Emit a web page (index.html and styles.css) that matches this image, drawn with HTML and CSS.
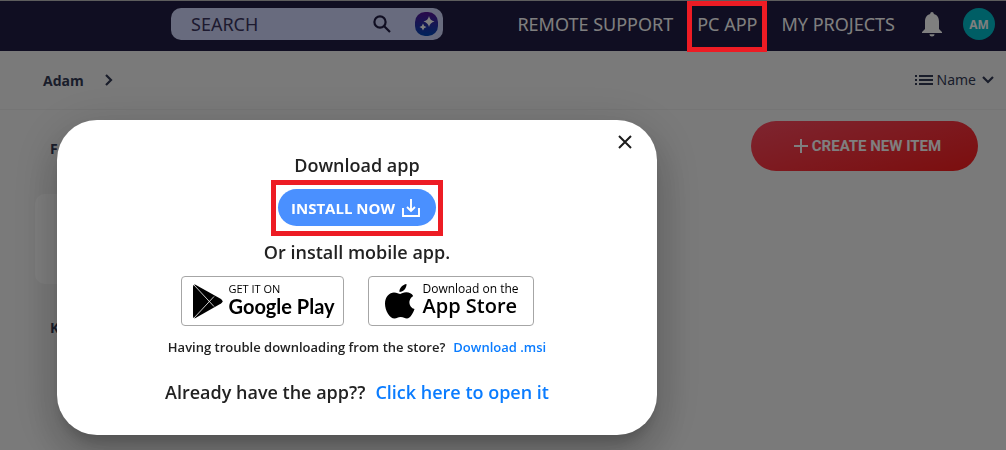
FILE: index.html
```html
<!DOCTYPE html>
<html lang="en">
<head>
<meta charset="utf-8">
<meta name="viewport" content="width=device-width, initial-scale=1">
<title>Projects</title>
<link rel="stylesheet" href="styles.css">
</head>
<body>
<header class="topbar">
  <form class="search">
    <input class="search-input" type="search" placeholder="SEARCH" aria-label="Search">
    <button class="icon-btn" type="button" aria-label="Search"><svg width="18" height="18" viewBox="0 0 18 18" fill="none" stroke="#201c44" stroke-width="2.2"><circle cx="7" cy="7" r="5.6"/><path d="M11 11l6 6"/></svg></button>
    <button class="ai-btn" type="button" aria-label="Assistant"><svg width="16" height="16" viewBox="0 0 16 16" fill="#fff"><path d="M10 0q1 4.500 5.500 5.500q-4.500 1-5.500 5.500q-1-4.500-5.500-5.500q4.500-1 5.500-5.500zM4 7.500q.6 3 3.500 3.500q-2.900.6-3.500 3.500q-.6-2.900-3.500-3.500q2.900-.5 3.500-3.500z"/></svg></button>
  </form>
  <nav class="nav">
    <a href="#">REMOTE SUPPORT</a>
    <a href="#">PC APP</a>
    <a href="#">MY PROJECTS</a>
  </nav>
  <button class="icon-btn bell" type="button" aria-label="Notifications"><svg width="20" height="25" viewBox="0 0 20 25" fill="#fff"><path d="M10 0c1.100 0 1.800.8 1.800 1.900C15.400 2.800 17 5.800 17 9.500V17l3 3v1H0v-1l3-3V9.500c0-3.700 1.600-6.700 5.200-7.600C8.200.8 8.900 0 10 0zM7.500 22.300h5c0 1.400-1.100 2.200-2.500 2.200s-2.500-.8-2.500-2.200z"/></svg></button>
  <button class="avatar" type="button">AM</button>
</header>
<div class="crumbs">
  <a class="crumb" href="#">Adam</a>
  <svg width="8" height="12" viewBox="0 0 8 12" fill="none" stroke="#333a55" stroke-width="2.200"><path d="M1 1l5 5-5 5"/></svg>
  <button class="sort" type="button"><svg width="18" height="10" viewBox="0 0 18 10" fill="#333a55"><path d="M0 0h2v2H0zM4 0h14v2H4zM0 4h2v2H0zM4 4h14v2H4zM0 8h2v2H0zM4 8h14v2H4z"/></svg><span>Name</span><svg class="caret" width="12" height="8" viewBox="0 0 12 8" fill="none" stroke="#333a55" stroke-width="2.200"><path d="M1 1l5 5 5-5"/></svg></button>
</div>
<main class="content">
  <div class="actions">
    <h2 class="section-title">F</h2>
    <button class="create" type="button"><svg width="14" height="14" viewBox="0 0 14 14" stroke="#fff" stroke-width="2"><path d="M7 0v14M0 7h14"/></svg><span>CREATE NEW ITEM</span></button>
  </div>
  <div class="card"></div>
  <h2 class="section-title">K</h2>
</main>
<div class="backdrop">
  <section class="modal" role="dialog" aria-label="Download app">
    <button class="close" type="button" aria-label="Close"><svg width="14" height="14" viewBox="0 0 14 14" fill="none" stroke="#1c1c1c" stroke-width="2"><path d="M1 1l12 12M13 1L1 13"/></svg></button>
    <h1 class="line">Download app</h1>
    <div class="install-mark">
      <button class="install" type="button"><span>INSTALL NOW</span><svg width="18" height="18" viewBox="0 0 18 18" fill="none" stroke="#fff" stroke-width="1.900"><path d="M1 9v8h16V9M9 0v12M5 8l4 4 4-4"/></svg></button>
    </div>
    <p class="line">Or install mobile app.</p>
    <div class="stores">
      <a class="store google" href="#"><svg width="31" height="35" viewBox="0 0 31 35"><path d="M2.500.7L28 15q3 2.300 0 4.600L2.500 34Q0 35 0 32V3Q0-.2 2.500.7z" fill="#000"/><path d="M1 1l20 21.500M1 34l20-21.500" stroke="#fff" stroke-width=".8"/></svg><span class="store-text"><small>GET IT ON</small><strong>Google Play</strong></span></a>
      <a class="store apple" href="#"><svg width="30" height="35" viewBox="0 0 30 35" fill="#000"><path d="M21.500 0c.3 3.800-3 8-7 8C14 4.200 17.700.6 21.500 0zM15.200 9.900c1.300 0 3.200-1.600 6.100-1.600 3 0 5.500 1.400 6.900 3.600-5.800 3.500-4.700 11 1.300 13.200-1.200 3.400-4.100 9.500-7.600 9.500-2.300 0-3.300-1.500-6.200-1.500-2.900 0-3.900 1.500-6.100 1.500C4.800 34.600 0 26.700 0 19.800 0 12.500 4.600 8.500 9 8.500c2.900 0 4.800 1.400 6.200 1.400z"/></svg><span class="store-text"><small>Download on the</small><strong>App Store</strong></span></a>
    </div>
    <p class="trouble"><span>Having trouble downloading from the store?</span><a href="#">Download .msi</a></p>
    <p class="line already"><span>Already have the app??</span><a href="#">Click here to open it</a></p>
  </section>
</div>
<div class="nav-mark"></div>
</body>
</html>
```
FILE: styles.css
```css
* { box-sizing: border-box; }
body {
  margin: 0;
  min-height: 100vh;
  background: #f5f5f5;
  border-top: 1px solid #bbb;
  font-family: "Open Sans", "Noto Sans", sans-serif;
  color: #333a55;
  overflow: hidden;
}
button { border: 0; padding: 0; background: none; font: inherit; color: inherit; cursor: pointer; }
a { color: inherit; text-decoration: none; }
h1, h2, p { margin: 0; }
svg { display: block; flex: none; }

.topbar {
  display: flex;
  align-items: center;
  height: 50px;
  padding: 0 11px 0 171px;
  background: #201c44;
  color: #fff;
}
.search {
  display: flex;
  align-items: center;
  flex: 0 1 272px;
  min-width: 0;
  height: 32px;
  margin: 0 auto 4px 0;
  padding: 0 5px 0 20px;
  border-radius: 10px;
  background: #d0d7fc;
}
.search-input {
  flex: 1;
  width: 0;
  min-width: 0;
  border: 0;
  padding: 0;
  outline: 0;
  background: none;
  font: 18px "Noto Sans", sans-serif;
}
.search-input::placeholder { color: #3a3560; opacity: 1; }
.icon-btn { flex: none; }
.ai-btn {
  display: grid;
  place-items: center;
  width: 23px;
  height: 24px;
  margin-left: 24px;
  border-radius: 10px;
  background: linear-gradient(#541496, #0047b8);
}
.nav { display: flex; gap: 24px; margin-bottom: 4px; font: 18px/24px "Noto Sans", sans-serif; white-space: nowrap; }
.bell { margin: 0 0 4px 27px; }
.avatar {
  flex: none;
  width: 32px;
  height: 32px;
  margin: 0 0 4px 21px;
  border-radius: 50%;
  background: #00bcca;
  font-size: 12px;
  font-weight: 700;
}

.crumbs {
  display: flex;
  align-items: center;
  height: 59px;
  padding: 0 12px 0 43px;
  border-bottom: 1px solid #ebebeb;
}
.crumb { margin-right: 21px; font-size: 14px; font-weight: 700; }
.sort { display: flex; align-items: center; margin-left: auto; gap: 4px; font: 14px/20px "Noto Sans", sans-serif; }
.caret { margin-left: 2px; }

.content { padding: 11px 28px 0 35px; }
.actions { display: flex; justify-content: space-between; height: 73px; }
.section-title { padding-left: 15px; font-size: 14px; line-height: 20px; }
.actions .section-title { padding-top: 18px; }
.create {
  display: flex;
  align-items: center;
  justify-content: center;
  gap: 4px;
  width: 227px;
  height: 50px;
  padding-left: 6px;
  border-radius: 25px;
  background: linear-gradient(165deg, #fc4a60, #f81c1c);
  color: #fff;
  font: 700 15px/20px Roboto, sans-serif;
}
.card { width: 240px; height: 90px; margin-bottom: 34px; border-radius: 10px; background: #fff; }

.backdrop { position: fixed; inset: 0; padding: 120px 57px 15px; background: rgba(0, 0, 0, .5); }
.modal {
  position: relative;
  display: flex;
  flex-direction: column;
  align-items: center;
  max-width: 600px;
  padding: 33px 16px 31px;
  border-radius: 40px;
  background: #fff;
  color: #222;
  box-shadow: 0 11px 15px -7px rgba(0, 0, 0, .2), 0 24px 38px 3px rgba(0, 0, 0, .14), 0 9px 46px 8px rgba(0, 0, 0, .12);
}
.close { position: absolute; top: 15px; right: 25px; }
.line { font-size: 18px; font-weight: 600; line-height: 24px; }
.install-mark { margin: 3px 0 4px; padding: 4px 2px 5px; border: 5px solid #ed1c24; }
.install {
  display: flex;
  align-items: center;
  gap: 7px;
  height: 37px;
  padding: 0 16px 0 13px;
  border-radius: 20px;
  background: #4a90ff;
  color: #fff;
  font-size: 15px;
  font-weight: 700;
}
.stores { display: flex; gap: 24px; margin: 12px 0 11px; }
.store {
  display: flex;
  align-items: center;
  height: 50px;
  border: 1px solid #a6a6a6;
  border-radius: 4px;
  color: #000;
}
.google { width: 163px; padding-left: 11px; gap: 5px; }
.apple { width: 166px; padding-left: 16px; gap: 8px; }
.store-text { display: flex; flex-direction: column; padding-bottom: 4px; white-space: nowrap; }
.store small { font-size: 12px; line-height: 14px; }
.store strong { font-size: 20px; font-weight: 600; line-height: 20px; }
.google small { font-size: 11px; }
.google strong { font-family: Lato, sans-serif; font-weight: 700; }
.trouble { display: flex; gap: 8px; font-size: 13px; font-weight: 600; line-height: 20px; }
.already { display: flex; gap: 10px; margin-top: 23px; }
.modal p a { color: #0a7cff; }

.nav-mark { position: absolute; top: 1px; right: 239px; width: 80px; height: 51px; border: 5px solid #ed1c24; pointer-events: none; }
```
